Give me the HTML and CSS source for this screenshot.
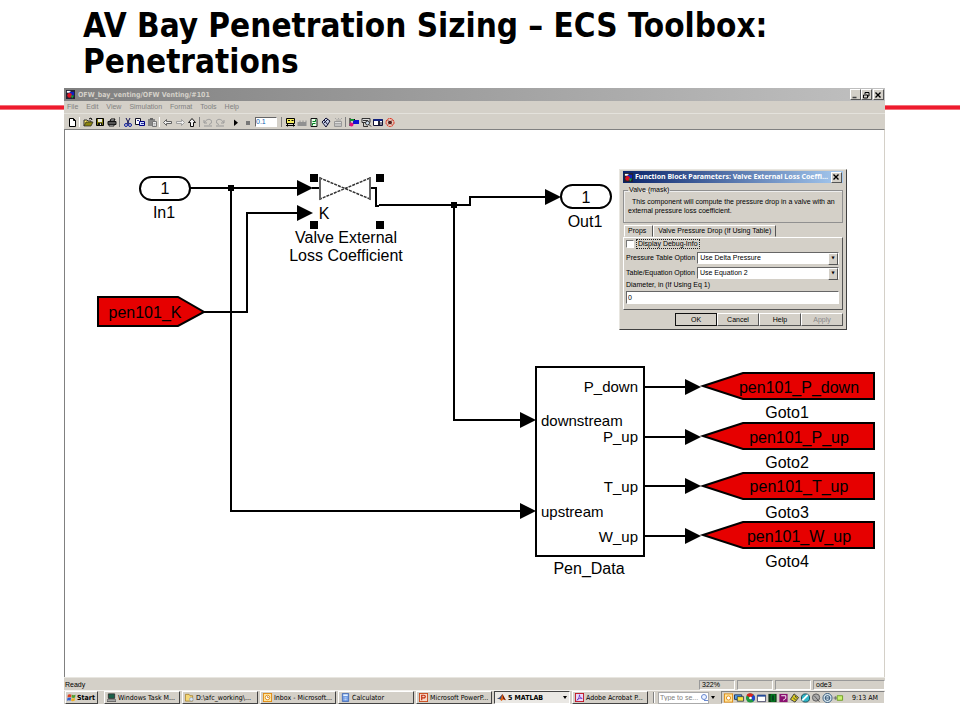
FILE: index.html
```html
<!DOCTYPE html>
<html lang="en">
<head>
<meta charset="utf-8">
<title>AV Bay Penetration Sizing</title>
<link rel="stylesheet" href="styles.css">
</head>
<body>
<main class="slide">
  <h1 class="headline">AV Bay Penetration Sizing – ECS Toolbox: Penetrations</h1>
  <div class="rule"></div>
  <section class="window">
    <header class="titlebar">
      <svg class="app-icon" viewBox="0 0 10 10"><rect width="10" height="10" fill="#223"/><path d="M1 1h4v2H1z" fill="#fff"/><path d="M4 2h5v4H4z" fill="#1020c0"/><circle cx="4" cy="6" r="2.6" fill="#e01020"/><path d="M5 6h4L7 9.500z" fill="#10a040"/></svg>
      <span class="title">OFW_bay_venting/OFW Venting/#101</span>
      <div class="caption-buttons">
        <button class="cap" aria-label="Minimize"><svg viewBox="0 0 8 8"><path d="M1.500 6.500h4" stroke="#444" stroke-width="1.500"/></svg></button>
        <button class="cap" aria-label="Restore"><svg viewBox="0 0 8 8"><path d="M3 3V1.500h4V5H5.500M1.500 4h4v3h-4z" fill="none" stroke="#000"/></svg></button>
        <button class="cap cap-close" aria-label="Close"><svg viewBox="0 0 8 8"><path d="M1.500 1.500l5 5M6.500 1.500l-5 5" stroke="#000" stroke-width="1.400"/></svg></button>
      </div>
    </header>
    <nav class="menubar">
      <a href="#">File</a><a href="#">Edit</a><a href="#">View</a><a href="#">Simulation</a><a href="#">Format</a><a href="#">Tools</a><a href="#">Help</a>
    </nav>
    <div class="toolbar">
      <button aria-label="New"><svg viewBox="0 0 12 12"><path d="M3.500 2.500h4l2 2v6h-6zM7.500 2.500v2h2" fill="#fff" stroke="#000"/></svg></button>
      <i class="sep"></i>
      <button aria-label="Open"><svg viewBox="0 0 12 12"><path d="M2 10V4h3l1 1h3v2" fill="#ffe860" stroke="#333"/><path d="M2 10l2-4h7l-2 4z" fill="#8a8410" stroke="#222" stroke-width=".7"/><path d="M7 3l2-1 1 2" fill="none" stroke="#000"/></svg></button>
      <button aria-label="Save"><svg viewBox="0 0 12 12"><path d="M2.500 2.500h7v7h-7z" fill="#77720c" stroke="#000"/><path d="M4 3h4v3H4z" fill="#e8e8e0"/><path d="M4 7h4v2.500H4z" fill="#111"/><path d="M6 7.500h1V9H6z" fill="#fff"/></svg></button>
      <button aria-label="Print"><svg viewBox="0 0 12 12"><path d="M4 5l1-2h4L8 5z" fill="#eee" stroke="#000"/><path d="M2 5.500h8v3H2z" fill="#555" stroke="#111"/><path d="M3 8.500h5v1.500H3z" fill="#ddd" stroke="#222"/></svg></button>
      <i class="sep dark"></i>
      <button aria-label="Cut"><svg viewBox="0 0 12 12"><path d="M4 2l3 6M8 2L5 8" stroke="#101050"/><circle cx="4" cy="9" r="1.500" fill="none" stroke="#1020a0"/><circle cx="8" cy="9" r="1.500" fill="none" stroke="#1020a0"/></svg></button>
      <button aria-label="Copy"><svg viewBox="0 0 12 12"><path d="M1.500 2.500h5v6h-5z" fill="#fff" stroke="#112"/><path d="M5.500 5.500h5v4h-5z" fill="#cdf" stroke="#000080"/><path d="M7 7.500h3M3 4.500h2" stroke="#000080" stroke-width=".8"/></svg></button>
      <button aria-label="Paste"><svg viewBox="0 0 12 12"><path d="M2 3h7v7H2z" fill="#888"/><path d="M4 2h3v2H4z" fill="#666"/><path d="M6.500 5.500h4v5h-4z" fill="#eee" stroke="#777"/><path d="M7.500 7.500h2M7.500 9h2" stroke="#888" stroke-width=".7"/></svg></button>
      <i class="sep"></i>
      <button aria-label="Back"><svg viewBox="0 0 12 12"><path d="M1.500 6.500l3-3v2h5v2h-5v2z" fill="#eee" stroke="#555" stroke-width=".9"/></svg></button>
      <button aria-label="Forward"><svg viewBox="0 0 12 12"><path d="M10.500 6.500l-3-3v2h-5v2h5v2z" fill="#eee" stroke="#999" stroke-width=".9"/></svg></button>
      <button aria-label="Up to parent"><svg viewBox="0 0 12 12"><path d="M6 2.500l3.500 4h-2v4h-3v-4h-2z" fill="#f4f4f4" stroke="#111"/></svg></button>
      <i class="sep dark"></i>
      <button aria-label="Undo"><svg viewBox="0 0 12 12"><path d="M2 4v3h3M2.500 6.500C5 2 9.500 3 9.500 5.500S8 8 7 8.500M2 10h8" fill="none" stroke="#999"/></svg></button>
      <button aria-label="Redo"><svg viewBox="0 0 12 12"><path d="M10 4v3H7M9.500 6.500C7 2 2.500 3 2.500 5.500S4 8 5 8.500M2 10h8" fill="none" stroke="#999"/></svg></button>
      <i class="sep clear"></i>
      <button aria-label="Start simulation"><svg viewBox="0 0 12 12"><path d="M4 3.500v6.500l4-3.200z"/></svg></button>
      <button aria-label="Stop simulation"><svg viewBox="0 0 12 12"><path d="M4 5h4v4H4z" fill="#777"/></svg></button>
      <input class="stop-time" type="text" value="0.1" aria-label="Stop time">
      <i class="sep dark"></i>
      <button aria-label="Library"><svg viewBox="0 0 12 12"><path d="M2.500 2.500h8v5h-8z" fill="#f4ec60" stroke="#000"/><path d="M2 9.500h9M3.500 10.500v-3M9.500 10.500v-3M4 4.500h2M7.500 4.500h2" stroke="#000"/></svg></button>
      <button aria-label="Build"><svg viewBox="0 0 12 12"><path d="M1.500 10V6h2V4.500h1V6h2V4.500h1V6h2V4.500h1V10z" fill="#909090"/></svg></button>
      <button aria-label="Refresh"><svg viewBox="0 0 12 12"><path d="M3 2.500h6v8H3z" fill="#e8ffe8" stroke="#111"/><path d="M4.500 5.500h3v-2M7.500 7.500h-3v2" fill="none" stroke="#008020"/></svg></button>
      <button aria-label="Update diagram"><svg viewBox="0 0 12 12"><path d="M2 6l4-4 4 3-4 6z" fill="#c8d0e8" stroke="#113"/><path d="M4 4l4 5M8 3L4 7" stroke="#113"/></svg></button>
      <button aria-label="Build subsystem"><svg viewBox="0 0 12 12"><path d="M2.500 5.500h7v5h-7z" fill="#ddd" stroke="#999"/><path d="M3 2.500h1M6 2.500h1M9 2.500h1M3 7.500h6M3 9h6M4 4h5" stroke="#999" stroke-width=".8"/></svg></button>
      <i class="sep dark"></i>
      <button aria-label="Library browser"><svg viewBox="0 0 12 12"><path d="M2 2v8M2 3.500h5" stroke="#000"/><path d="M5 4h6v4H5z" fill="#1010d0"/><circle cx="3.500" cy="8.500" r="2" fill="#e0107a"/><path d="M2 3h4v2H2z" fill="#109030"/></svg></button>
      <button aria-label="Model explorer"><svg viewBox="0 0 12 12"><path d="M2 2.500h8v4H2z" fill="#ddd" stroke="#333"/><path d="M3.500 6v4.500H8M3 4.500h5" stroke="#333" fill="none"/><circle cx="7.500" cy="7" r="2" fill="#cde" stroke="#333"/><path d="M9 8.500l2 2" stroke="#222"/></svg></button>
      <button aria-label="Model browser"><svg viewBox="0 0 12 12"><path d="M1.500 3.500h9v6h-9z" fill="#fff" stroke="#113"/><path d="M1.500 3h9v2h-9z" fill="#102080"/><path d="M6 5h2v4H6z" fill="#223"/><path d="M9 6v4" stroke="#113"/></svg></button>
      <button aria-label="Debug"><svg viewBox="0 0 12 12"><circle cx="6" cy="6.500" r="4" fill="#e8c8b8" stroke="#e02010" stroke-dasharray="2 .6"/><circle cx="6" cy="6.500" r="1.800" fill="#311"/><path d="M3.500 4l5 5M8.500 4l-5 5" stroke="#722" stroke-width=".7"/></svg></button>
    </div>

    <div class="canvas">
      <svg class="diagram" viewBox="65 130 819 547" width="819" height="547">
        <defs>
          <path id="arrow" d="M0-8L16 0L0 8z"/>
          <path id="goto" d="M703 0L743-13H874V13H743z" fill="#e60000" stroke="#000" stroke-width="2"/>
        </defs>
        <g fill="none" stroke="#000" stroke-width="2">
          <path d="M190 188H298M231 188V511H521"/>
          <path d="M204 312H247V213H298"/>
          <path d="M379 205H470V197H546M454 205V420H521"/>
          <path d="M644 387H686M644 437H686M644 486H686M644 536H686"/>
          <path d="M312 188H320M370 188H376V206H379"/>
          <rect x="140" y="177" width="50" height="23" rx="11.500" fill="#fff"/>
          <rect x="561" y="185" width="50" height="23" rx="11.500" fill="#fff"/>
          <rect x="536" y="367" width="108" height="189" fill="#fff"/>
          <path d="M98 297H178L204 312L178 326H98z" fill="#e60000"/>
        </g>
        <path d="M320 178V199L370 178V199z" fill="#fff" stroke="#333" stroke-width="1.500" stroke-dasharray="3 1"/>
        <path d="M320 177V200M370 177V200" stroke="#666" stroke-width="2"/>
        <g>
          <rect x="228" y="185" width="6" height="6"/><rect x="451" y="202" width="6" height="6"/>
          <rect x="310" y="174" width="8" height="8"/><rect x="376" y="174" width="8" height="8"/>
          <rect x="310" y="221" width="8" height="8"/><rect x="376" y="221" width="8" height="8"/>
          <use href="#arrow" x="297" y="188"/><use href="#arrow" x="297" y="213"/>
          <use href="#arrow" x="545" y="197"/><use href="#arrow" x="520" y="420"/><use href="#arrow" x="520" y="511"/>
          <use href="#arrow" x="685" y="387"/><use href="#arrow" x="685" y="437"/><use href="#arrow" x="685" y="486"/><use href="#arrow" x="685" y="536"/>
          <use href="#goto" y="386"/><use href="#goto" y="436"/><use href="#goto" y="486"/><use href="#goto" y="535"/>
        </g>
        <g class="label mid">
          <text x="165" y="194">1</text><text x="164" y="218">In1</text>
          <text x="586" y="203">1</text><text x="585" y="227">Out1</text>
          <text x="324" y="219">K</text>
          <text x="346" y="243">Valve External</text><text x="346" y="261">Loss Coefficient</text>
          <text x="145" y="318">pen101_K</text>
          <text x="589" y="574">Pen_Data</text>
          <text x="799" y="393">pen101_P_down</text><text x="787" y="418">Goto1</text>
          <text x="799" y="443">pen101_P_up</text><text x="787" y="468">Goto2</text>
          <text x="799" y="492">pen101_T_up</text><text x="787" y="518">Goto3</text>
          <text x="799" y="542">pen101_W_up</text><text x="787" y="567">Goto4</text>
        </g>
        <g class="port">
          <text x="541" y="426">downstream</text><text x="541" y="517">upstream</text>
          <g class="end">
            <text x="638" y="392">P_down</text><text x="638" y="442">P_up</text>
            <text x="638" y="492">T_up</text><text x="638" y="542">W_up</text>
          </g>
        </g>
      </svg>

      <form class="dialog">
        <div class="dialog-title">
          <svg class="app-icon" viewBox="0 0 10 10"><rect width="10" height="10" fill="#223"/><path d="M1 1h4v2H1z" fill="#fff"/><path d="M4 2h5v4H4z" fill="#1020c0"/><circle cx="4" cy="6" r="2.600" fill="#e01020"/><path d="M5 6h4L7 9.500z" fill="#10a040"/></svg>
          <span class="title">Function Block Parameters: Valve External Loss Coeffi...</span>
          <button class="cap" type="button" aria-label="Close dialog"><svg viewBox="0 0 8 8"><path d="M1.500 1.500l5 5M6.500 1.500l-5 5" stroke="#000" stroke-width="1.400"/></svg></button>
        </div>
        <fieldset class="group">
          <legend>Valve (mask)</legend>
          <p>This component will compute the pressure drop in a valve with an external pressure loss coefficient.</p>
        </fieldset>
        <div class="tabs"><button type="button" class="tab active">Props</button><button type="button" class="tab">Valve Pressure Drop (If Using Table)</button></div>
        <div class="panel">
          <label class="check"><input type="checkbox"><span>Display Debug-Info</span></label>
          <div class="row"><label for="pt">Pressure Table Option</label><span class="pick"><select id="pt"><option>Use Delta Pressure</option></select></span></div>
          <div class="row"><label for="eq">Table/Equation Option</label><span class="pick"><select id="eq"><option>Use Equation 2</option></select></span></div>
          <label class="stack" for="dia">Diameter, in (If Using Eq 1)</label>
          <input class="text" id="dia" type="text" value="0">
        </div>
        <div class="actions">
          <button type="button" class="btn default">OK</button><button type="button" class="btn">Cancel</button><button type="button" class="btn">Help</button><button type="button" class="btn" disabled>Apply</button>
        </div>
      </form>
    </div>

    <footer class="status">
      <span class="ready">Ready</span><span class="cell">322%</span><span class="cell"></span><span class="cell"></span><span class="cell wide">ode3</span>
    </footer>
    <nav class="taskbar">
      <button class="start"><svg viewBox="0 0 10 10"><path d="M1 2q2-1 4 0L4.500 5Q3 4 .5 5z" fill="#e04020"/><path d="M5.500 2q2 1 4 0L9 5Q7 6 5 5z" fill="#50a030"/><path d="M.5 5.500Q3 4.500 4.500 5.500L4 8.500Q2 7.500 0 8.500z" fill="#3060d0"/><path d="M5 5.700Q7 6.500 9 5.600L8.500 8.600Q6 9.500 4.500 8.600z" fill="#f0b020"/></svg>Start</button>
      <button class="task"><svg viewBox="0 0 10 10"><path d="M1.500 1h7v5h-7z" fill="#186048" stroke="#333"/><path d="M0 7.500h10v2H0z" fill="#bbb" stroke="#333" stroke-width=".7"/></svg><span>Windows Task M...</span></button>
      <button class="task"><svg viewBox="0 0 10 10"><path d="M.5 1.500h4l1 1.500h3v6h-8z" fill="#f4d878" stroke="#a07820" stroke-width=".8"/><circle cx="7" cy="7" r="2" fill="#d8e8f8" stroke="#8898b0" stroke-width=".7"/></svg><span>D:\afc_working\...</span></button>
      <button class="task"><svg viewBox="0 0 10 10"><rect x=".5" y=".5" width="9" height="9" fill="#ffe6a0" stroke="#e08a10"/><circle cx="5" cy="5" r="2.500" fill="#fff" stroke="#e08a10"/><path d="M5 3.500V5h1.500" stroke="#a05a00" fill="none" stroke-width=".7"/></svg><span>Inbox - Microsoft...</span></button>
      <button class="task"><svg viewBox="0 0 10 10"><path d="M1.500.5h7v9h-7z" fill="#6090e0" stroke="#3058a8" stroke-width=".7"/><path d="M2.500 1.500h5v2h-5z" fill="#e8f4ff"/><path d="M3 5.500h4M3 7.500h4" stroke="#fff" stroke-dasharray="1 .5"/></svg><span>Calculator</span></button>
      <button class="task"><svg viewBox="0 0 10 10"><rect x=".5" y=".5" width="9" height="9" fill="#f8d8c8" stroke="#c84818"/><path d="M3 8V2.500h2.500a1.500 1.500 0 010 3H3" fill="none" stroke="#c03010" stroke-width="1.300"/></svg><span>Microsoft PowerP...</span></button>
      <button class="task pressed"><svg viewBox="0 0 10 10"><path d="M0 6l3-1 3-4 3 7-2-1-2 2-2-2z" fill="#e06010"/><path d="M0 6l3-1 3-4-2 6z" fill="#205090"/><path d="M6 1l1 6 3 1z" fill="#701808"/></svg><span>5 MATLAB</span><i class="caret"></i></button>
      <button class="task"><svg viewBox="0 0 10 10"><rect x=".5" y=".5" width="9" height="9" fill="#e8d8f8" stroke="#c01020"/><path d="M2 8c2-1 3-4 3-6 0 3 2 4 3 4-2-.5-4 0-6 2" fill="none" stroke="#7038c0"/></svg><span>Adobe Acrobat P...</span></button>
      <i class="grip"></i>
      <div class="search">
        <input type="text" placeholder="Type to se..." aria-label="Desktop search">
        <svg viewBox="0 0 8 10"><circle cx="4" cy="4" r="2.500" fill="#eef4ff" stroke="#6888d0"/><path d="M4 7.500h4" stroke="#6888d0"/></svg>
      </div>
      <i class="caret"></i>
      <div class="tray">
        <svg viewBox="0 0 11 11"><rect x="1" y="1" width="9" height="9" fill="#ffe6a0" stroke="#e08a10"/><circle cx="5.500" cy="5.500" r="2.300" fill="#fff" stroke="#e08a10"/></svg>
        <svg viewBox="0 0 11 11"><path d="M0 2h8v5H0z" fill="#50a0f0" stroke="#235"/><path d="M3 4h7v5H3z" fill="#f8e040" stroke="#345"/></svg>
        <svg viewBox="0 0 11 11"><circle cx="5.500" cy="5.500" r="5" fill="#209840"/><path d="M5.500 5.500L1 2.500A5 5 0 019 2z" fill="#d82020"/><path d="M5.500 5.500L9 2a5 5 0 010 7z" fill="#2040d0"/><circle cx="5.500" cy="5.500" r="1.500" fill="#fff"/></svg>
        <svg viewBox="0 0 11 11"><path d="M1 2.500h9v7H1z" fill="#fff" stroke="#446"/><path d="M1 2h9v2H1z" fill="#224a98"/></svg>
        <svg viewBox="0 0 11 11"><path d="M1 1h9v9H1z" fill="#103818"/><path d="M4 2h4v7H4z" fill="#064020" stroke="#092"/></svg>
        <svg viewBox="0 0 11 11"><path d="M1 1h9v9H1z" fill="#8a1070"/><path d="M3 3h5v3L5 8" fill="none" stroke="#fff"/></svg>
        <svg viewBox="0 0 11 11"><path d="M1 7l4-6 5 4-4 5z" fill="#e0d020" stroke="#333"/><path d="M4 5l3 3M6 3l2 3" stroke="#333"/></svg>
        <svg viewBox="0 0 11 11"><circle cx="5.500" cy="5.500" r="4.500" fill="#30b8c8" stroke="#145"/><path d="M2 8l6-6" stroke="#fff" stroke-width="2"/></svg>
        <svg viewBox="0 0 11 11"><circle cx="5" cy="5" r="4" fill="#aaa" stroke="#555"/><path d="M3 3l6 7" stroke="#555"/></svg>
        <svg viewBox="0 0 11 11"><circle cx="5.500" cy="5.500" r="5" fill="#d8e8f0" stroke="#357"/><circle cx="5.500" cy="5.500" r="2.600" fill="none" stroke="#246"/><path d="M3 5.500h5" stroke="#246"/></svg>
        <svg viewBox="0 0 11 11"><path d="M4 3h6v5H4z" fill="#c8f070" stroke="#6a9a20"/><path d="M0 5.500h4M2 3.500v4" stroke="#666"/></svg>
        <span class="clock">9:13 AM</span>
      </div>
    </nav>
  </section>
</main>
</body>
</html>
```
FILE: styles.css
```css
* { box-sizing: border-box; }

body {
  margin: 0;
  background: #fff;
  color: #000;
  font-family: "Liberation Sans", sans-serif;
}

.slide {
  position: relative;
  padding: 8px 75px 16px 64px;
}

.headline {
  margin: 0 80px 8px 19px;
  font: bold 33px/36px "DejaVu Sans Condensed", "DejaVu Sans", sans-serif;
}

/* Red line that passes behind the window */
.rule {
  position: absolute;
  z-index: -1;
  left: 0;
  right: 0;
  top: 105px;
  height: 5px;
  background: #ee1c2e;
  border: solid #f4707a;
  border-width: 1px 0;
}

.window {
  background: #d4d0c8;
  font-size: 7px;
  line-height: 10px;
}

button, input, select {
  font: inherit;
  color: inherit;
  margin: 0;
  padding: 0;
  border-radius: 0;
}

svg { display: block; }

.titlebar {
  display: flex;
  align-items: center;
  gap: 3px;
  height: 13px;
  padding: 0 1px 0 2px;
  background: linear-gradient(90deg, #808080, #c0c0c0);
  color: #d4d0c8;
}

.app-icon { width: 9px; height: 9px; flex: none; }

.title {
  flex: 1;
  font: bold 7px/10px "DejaVu Sans Condensed", "DejaVu Sans", sans-serif;
  white-space: nowrap;
}

.caption-buttons { display: flex; }

.cap {
  width: 11px;
  height: 11px;
  flex: none;
  background: #d4d0c8;
  border: 1px solid;
  border-color: #fff #555 #555 #fff;
}

.cap svg { width: 8px; height: 8px; }

.cap-close { margin-left: 1px; }

.menubar {
  display: flex;
  gap: 8px;
  height: 13px;
  padding: 1px 3px;
  border-bottom: 1px solid #e4e2dc;
}

.menubar a {
  color: #808080;
  text-decoration: none;
}

.toolbar {
  display: flex;
  align-items: center;
  height: 15px;
  padding-left: 2px;
}

.toolbar button {
  width: 12px;
  height: 12px;
  border: 0;
  background: none;
}

.toolbar svg { width: 12px; height: 12px; }

.sep {
  width: 1px;
  height: 10px;
  margin: 0 2px 0 1px;
  background: #fff;
}

.sep.dark { background: #808080; }
.sep.clear { background: none; }

.stop-time {
  width: 22px;
  height: 10px;
  margin: 0 3px 0 1px;
  border: 1px solid;
  border-color: #666 #fff #fff #666;
  background: #fff;
  color: #1060b0;
}

.canvas {
  position: relative;
  background: #fff;
  border: solid #808080;
  border-width: 1px 1px 0 1px;
  border-right-color: #d4d0c8;
}

.diagram { max-width: 100%; }
.label { font-size: 16px; }
.mid { text-anchor: middle; }
.port { font-size: 15px; }
.end { text-anchor: end; }

/* Block parameter dialog floating over the model canvas */
.dialog {
  position: absolute;
  left: 554px;
  top: 39px;
  width: 228px;
  padding: 1px 3px 3px;
  background: #d4d0c8;
  border: 1px solid;
  border-color: #e8e6e0 #404040 #404040 #e8e6e0;
}

.dialog-title {
  display: flex;
  align-items: center;
  gap: 2px;
  height: 12px;
  padding: 0 1px;
  background: linear-gradient(90deg, #0a246a, #a6caf0);
  color: #fff;
}

.dialog-title .title { font-family: "Noto Sans", sans-serif; }

.group {
  min-width: 0;
  height: 37px;
  margin: 3px 0 2px;
  padding: 0 4px;
  border: 1px solid #909090;
  box-shadow: inset 1px 1px #eee;
}

.group legend { padding: 0 1px; line-height: 8px; }
.group p { margin: 3px 0 0; line-height: 9px; text-indent: 4px; }

.tabs { display: flex; padding-left: 1px; }

.tab {
  height: 12px;
  padding: 0 4px;
  background: #d4d0c8;
  border: 1px solid;
  border-color: #fff #555 transparent #fff;
}

.tab.active { padding: 0 6px 0 3px; }

.panel {
  display: flex;
  flex-direction: column;
  gap: 2px;
  height: 73px;
  padding: 1px 3px 2px 2px;
  border: 1px solid;
  border-color: #fff #555 #555 #fff;
}

.check { display: flex; align-items: center; gap: 2px; }

.check input {
  appearance: none;
  width: 8px;
  height: 8px;
  background: #fff;
  border: 1px solid;
  border-color: #777 #fff #fff #777;
}

.check span {
  border: 1px dotted #222;
  line-height: 8px;
  padding: 0 1px;
}

.row { display: flex; align-items: center; gap: 2px; height: 13px; }

.pick { position: relative; flex: 1; display: flex; }

.pick select {
  appearance: none;
  width: 100%;
  height: 12px;
  padding: 0 2px;
  background: #fff;
  border: 1px solid;
  border-color: #666 #fff #fff #666;
}

.pick::after {
  content: "▼";
  position: absolute;
  right: 1px;
  top: 1px;
  width: 8px;
  height: 10px;
  background: #d4d0c8;
  border: 1px solid;
  border-color: #fff #555 #555 #fff;
  font: 4px/8px "DejaVu Sans", sans-serif;
  text-align: center;
  pointer-events: none;
}

.stack { line-height: 8px; }

.text {
  height: 13px;
  padding: 0 1px;
  border: 1px solid;
  border-color: #666 #fff #fff #666;
  background: #fff;
}

.actions { display: flex; justify-content: flex-end; padding-top: 3px; }

.btn {
  width: 42px;
  height: 13px;
  background: #d4d0c8;
  border: 1px solid;
  border-color: #fff #555 #555 #fff;
}

.btn.default { border-color: #111; }
.btn:disabled { color: #888; }

.status {
  display: flex;
  height: 13px;
  padding-top: 2px;
  border-top: 1px solid #e8e6e0;
}

.ready { flex: 1; padding-left: 1px; }

.cell {
  width: 36px;
  margin-right: 2px;
  padding-left: 2px;
  border: 1px solid;
  border-color: #999 #fff #fff #999;
  line-height: 8px;
}

.cell.wide { width: 72px; margin: 0; }

.taskbar {
  display: flex;
  align-items: center;
  gap: 2px;
  height: 14px;
  border-top: 1px solid #f4f2ee;
  font: 7px/10px "DejaVu Sans Condensed", "DejaVu Sans", sans-serif;
}

.start, .task {
  display: flex;
  align-items: center;
  height: 13px;
  gap: 2px;
  padding: 0 2px;
  background: #d4d0c8;
  border: 1px solid;
  border-color: #fff #444 #444 #fff;
  white-space: nowrap;
}

.start { width: 33px; margin: 0 4px 0 1px; gap: 1px; padding: 0 1px; font-weight: bold; }
.start svg, .task svg { width: 9px; height: 9px; flex: none; }

.task { flex: 0 1 76px; min-width: 0; }

.pressed {
  background: #eae8e4;
  border-color: #444 #fff #fff #444;
  font-weight: bold;
}

.caret {
  width: 0;
  height: 0;
  margin-left: auto;
  border: 2px solid transparent;
  border-top: 3px solid #000;
  border-bottom: 0;
}

.taskbar > .caret { margin-left: 0; }

.grip {
  width: 2px;
  height: 11px;
  margin: 0 1px 0 3px;
  border-left: 1px solid #808080;
  background: #fff;
}

.search {
  display: flex;
  align-items: center;
  width: 51px;
  height: 12px;
  background: #fff;
  border: 1px solid #aaa;
}

.search input {
  flex: 1;
  min-width: 0;
  padding-left: 1px;
  border: 0;
  background: none;
  font-family: "Liberation Sans", sans-serif;
}

.search input::placeholder { color: #808080; }
.search svg { width: 8px; height: 10px; flex: none; }

.tray {
  display: flex;
  align-items: center;
  flex: 1;
  height: 13px;
  margin-left: 4px;
  padding: 0 6px 0 1px;
  border: 1px solid;
  border-color: #808080 #fff #fff #808080;
}

.tray svg { width: 11px; height: 10px; flex: none; }
.clock { margin-left: auto; white-space: nowrap; }
```
